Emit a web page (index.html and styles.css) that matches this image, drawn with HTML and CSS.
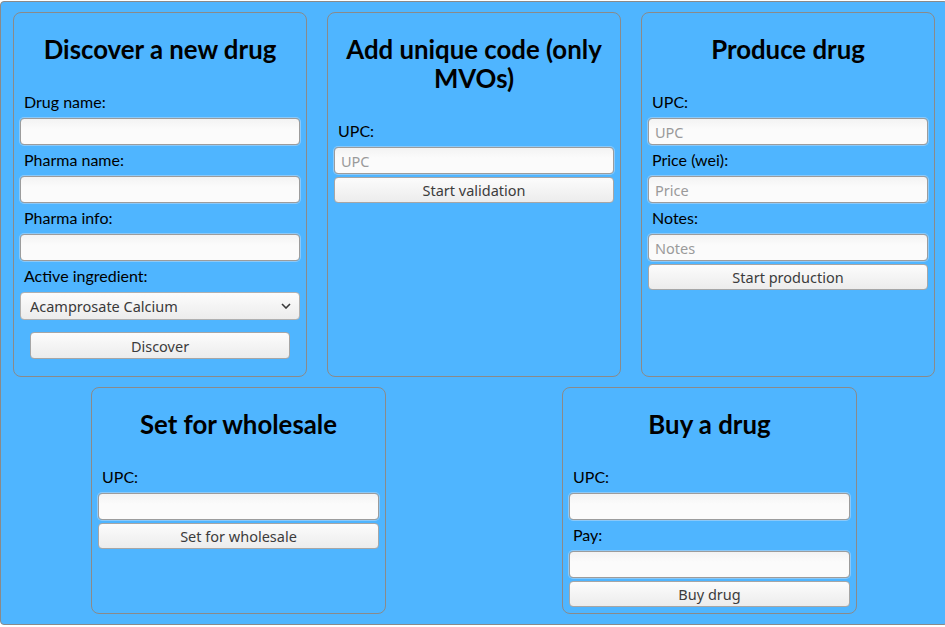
FILE: index.html
```html
<!DOCTYPE html>
<html lang="en">
<head>
<meta charset="utf-8">
<title>Drug supply chain</title>
<link rel="stylesheet" href="styles.css">
</head>
<body>
<div class="page">
  <div class="row row-top">
    <section class="card">
      <h2>Discover a new drug</h2>
      <label class="lbl">Drug name:</label>
      <input class="field" type="text">
      <label class="lbl">Pharma name:</label>
      <input class="field" type="text">
      <label class="lbl">Pharma info:</label>
      <input class="field" type="text">
      <label class="lbl">Active ingredient:</label>
      <div class="select-wrap">
        <select class="select">
          <option>Acamprosate Calcium</option>
        </select>
        <svg class="chev" width="10" height="6" viewBox="0 0 10 6"><path d="M1 1 L5 5 L9 1" fill="none" stroke="#3a3a3a" stroke-width="1.6"/></svg>
      </div>
      <button class="btn btn-inset">Discover</button>
    </section>
    <section class="card">
      <h2>Add unique code (only MVOs)</h2>
      <label class="lbl">UPC:</label>
      <input class="field tight" type="text" placeholder="UPC">
      <button class="btn">Start validation</button>
    </section>
    <section class="card">
      <h2>Produce drug</h2>
      <label class="lbl">UPC:</label>
      <input class="field" type="text" placeholder="UPC">
      <label class="lbl">Price (wei):</label>
      <input class="field" type="text" placeholder="Price">
      <label class="lbl">Notes:</label>
      <input class="field tight" type="text" placeholder="Notes">
      <button class="btn">Start production</button>
    </section>
  </div>
  <div class="row row-bottom">
    <section class="card card-wide">
      <h2>Set for wholesale</h2>
      <label class="lbl">UPC:</label>
      <input class="field tight" type="text">
      <button class="btn">Set for wholesale</button>
    </section>
    <section class="card card-wide">
      <h2>Buy a drug</h2>
      <label class="lbl">UPC:</label>
      <input class="field" type="text">
      <label class="lbl">Pay:</label>
      <input class="field tight" type="text">
      <button class="btn">Buy drug</button>
    </section>
  </div>
</div>
</body>
</html>
```
FILE: styles.css
```css
html, body {
  margin: 0;
  padding: 0;
  overflow: hidden;
  background: #ffffff;
}

.page {
  box-sizing: border-box;
  width: 948px;
  height: 624px;
  margin-top: 1px;
  padding: 10px 12px;
  background: #4fb5ff;
  border: 1px solid #8a8a8a;
  border-radius: 4px;
  display: flex;
  flex-direction: column;
  gap: 10px;
  font-family: Lato, "Liberation Sans", sans-serif;
}

.row {
  display: flex;
  align-items: stretch;
}

.row-top {
  gap: 20px;
}

.row-bottom {
  justify-content: center;
  gap: 176px;
}

.card {
  box-sizing: border-box;
  width: 294px;
  border: 1px solid #8a8a8a;
  border-radius: 8px;
  padding: 22px 6px 6px;
  display: flex;
  flex-direction: column;
}

.card-wide {
  width: 295px;
}

.card h2 {
  margin: 0 0 28px;
  font-family: Lato, sans-serif;
  font-weight: 700;
  font-size: 25.8px;
  line-height: 29px;
  text-align: center;
  color: #000;
}

.lbl {
  display: block;
  font-size: 16px;
  line-height: 20px;
  padding-left: 4px;
  margin-bottom: 6px;
  color: #000;
}

.field,
.select,
.btn {
  box-sizing: border-box;
  font-family: "Noto Sans", "Open Sans", sans-serif;
  font-size: 14.5px;
  margin: 0;
}

.field {
  height: 27px;
  width: 100%;
  padding: 0 6px;
  margin-bottom: 5px;
  border: 1px solid #9c9c9c;
  border-radius: 4px;
  background: linear-gradient(#f3f3f3, #fbfbfb 40%, #fbfbfb);
  box-shadow: 0 0 0 1px rgba(180, 215, 245, 0.6);
  color: #333;
  outline: none;
}

.field::placeholder {
  color: #9a9a9a;
}

.field.tight {
  margin-bottom: 3px;
}

.select-wrap {
  position: relative;
  height: 28px;
}

.select {
  appearance: none;
  -webkit-appearance: none;
  width: 100%;
  height: 28px;
  padding: 0 9px;
  border: 1px solid #b0b0b0;
  border-radius: 4px;
  background: linear-gradient(#fcfcfc, #ececec);
  color: #3a3a3a;
  outline: none;
}

.chev {
  position: absolute;
  right: 9px;
  top: 11px;
}

.btn {
  display: block;
  width: 100%;
  height: 26px;
  padding: 0;
  border: 1px solid #a6a6a6;
  border-radius: 4px;
  background: linear-gradient(#fcfcfc, #ececec);
  color: #3c3c3c;
  line-height: 24px;
  text-align: center;
}

.btn-inset {
  width: auto;
  height: 27px;
  margin: 12px 10px 11px;
}
```
